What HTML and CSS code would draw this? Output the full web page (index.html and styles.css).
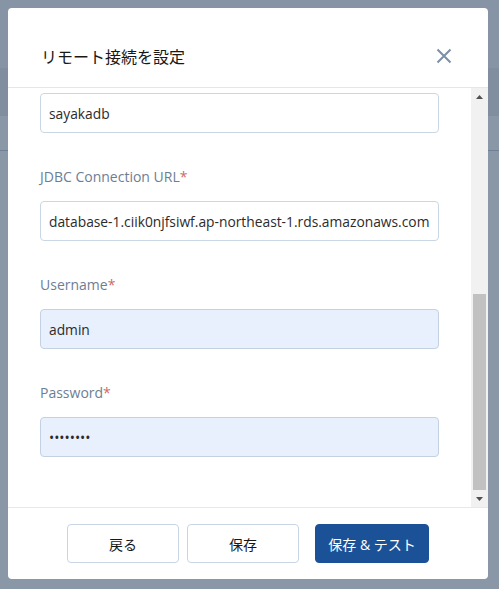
FILE: index.html
```html
<html>
	<head>
		<meta charset="utf-8">
		<title>リモート接続を設定</title>
		<meta name="viewport" content="width=device-width, initial-scale=1">
		<link rel="stylesheet" href="styles.css">
	</head>
	<body>
		<div class="modal">
			<div class="modal-header">
				<h2 class="modal-title">リモート接続を設定</h2>
				<button class="close" title="閉じる">
					<svg width="16" height="16" viewBox="0 0 16 16">
						<path d="M1.5 1.5 L14.5 14.5 M14.5 1.5 L1.5 14.5" stroke="#7b8fa7" stroke-width="2" fill="none"/>
					</svg>
				</button>
			</div>
			<div class="modal-body">
				<div class="form">
					<!-- scrolled to the bottom: the database name label is above the fold -->
					<div class="field first">
						<input type="text" value="sayakadb">
					</div>
					<div class="field">
						<label>JDBC Connection URL<span class="req">*</span></label>
						<input type="text" value="database-1.ciik0njfsiwf.ap-northeast-1.rds.amazonaws.com">
					</div>
					<div class="field">
						<label>Username<span class="req">*</span></label>
						<input type="text" class="filled" value="admin">
					</div>
					<div class="field">
						<label>Password<span class="req">*</span></label>
						<input type="password" class="filled" value="password">
					</div>
				</div>
				<div class="scrollbar">
					<div class="arrow">
						<svg width="7" height="4"><path d="M0 4 L3.5 0 L7 4 Z" fill="#505050"/></svg>
					</div>
					<div class="track">
						<div class="thumb"></div>
					</div>
					<div class="arrow">
						<svg width="7" height="4"><path d="M0 0 L7 0 L3.5 4 Z" fill="#505050"/></svg>
					</div>
				</div>
			</div>
			<div class="modal-footer">
				<button class="btn">戻る</button>
				<button class="btn">保存</button>
				<button class="btn btn-primary">保存 &amp; テスト</button>
			</div>
		</div>
	</body>
</html>
```
FILE: styles.css
```css
* {
	font-family: "Open Sans", "Noto Sans CJK JP", sans-serif;
	box-sizing: border-box;
}
body {
	margin: 0;
	padding: 8px 0 0 8px;
	background-color: #8a97a6;
	background-image: linear-gradient(to bottom,
		#8694a5 0, #8694a5 68px,
		#808ea0 68px, #808ea0 116px,
		#8a97a6 116px, #8a97a6 150px,
		#6f8096 150px, #6f8096 151px,
		#8a97a6 151px);
	background-repeat: no-repeat;
}
.modal {
	width: 480px;
	height: 571px;
	background: white;
	border-radius: 4px;
	display: flex;
	flex-direction: column;
	overflow: hidden;
}
.modal-header {
	height: 80px;
	flex: none;
	border-bottom: 1px solid #e1e7ee;
	display: flex;
	align-items: center;
	justify-content: space-between;
	padding: 17px 36px 0 33px;
}
.modal-title {
	margin: 0;
	font-family: "Noto Sans CJK JP", sans-serif;
	font-size: 16px;
	font-weight: normal;
	line-height: 24px;
	color: #181818;
}
.close {
	border: 0;
	background: none;
	padding: 0;
	width: 16px;
	height: 16px;
	display: flex;
}
.modal-body {
	height: 419px;
	flex: none;
	display: flex;
}
.form {
	flex: 1;
	padding: 5px 32px 0 32px;
}
.field {
	margin-top: 34px;
}
.field.first {
	margin-top: 0;
}
.field label {
	display: block;
	font-size: 14px;
	line-height: 20px;
	color: #6d7e94;
	margin-bottom: 14px;
}
.req {
	color: #d06a62;
}
.field input {
	display: block;
	width: 100%;
	height: 40px;
	border: 1px solid #c9d6e3;
	border-radius: 4px;
	padding: 0 8px;
	font-size: 13.8px;
	color: #2b2b2b;
	background: white;
}
.field input.filled {
	background: #e8f0fe;
	border-color: #c3d1e2;
}
.scrollbar {
	width: 17px;
	flex: none;
	background: #f1f1f1;
	display: flex;
	flex-direction: column;
}
.arrow {
	height: 17px;
	flex: none;
	display: flex;
	align-items: center;
	justify-content: center;
}
.track {
	flex: 1;
	display: flex;
	flex-direction: column;
	justify-content: flex-end;
	padding: 0 2px;
}
.thumb {
	height: 196px;
	background: #c1c1c1;
}
.modal-footer {
	flex: 1;
	border-top: 1px solid #e5e8ec;
	display: flex;
	align-items: center;
	justify-content: center;
	gap: 8px;
}
.btn {
	width: 112px;
	height: 39px;
	border: 1px solid #c7d5e4;
	border-radius: 4px;
	background: white;
	font-size: 14px;
	color: #181818;
}
.btn-primary {
	width: 114px;
	margin-left: 8px;
	background: #1b5297;
	border-color: #1b5297;
	color: white;
}
```
